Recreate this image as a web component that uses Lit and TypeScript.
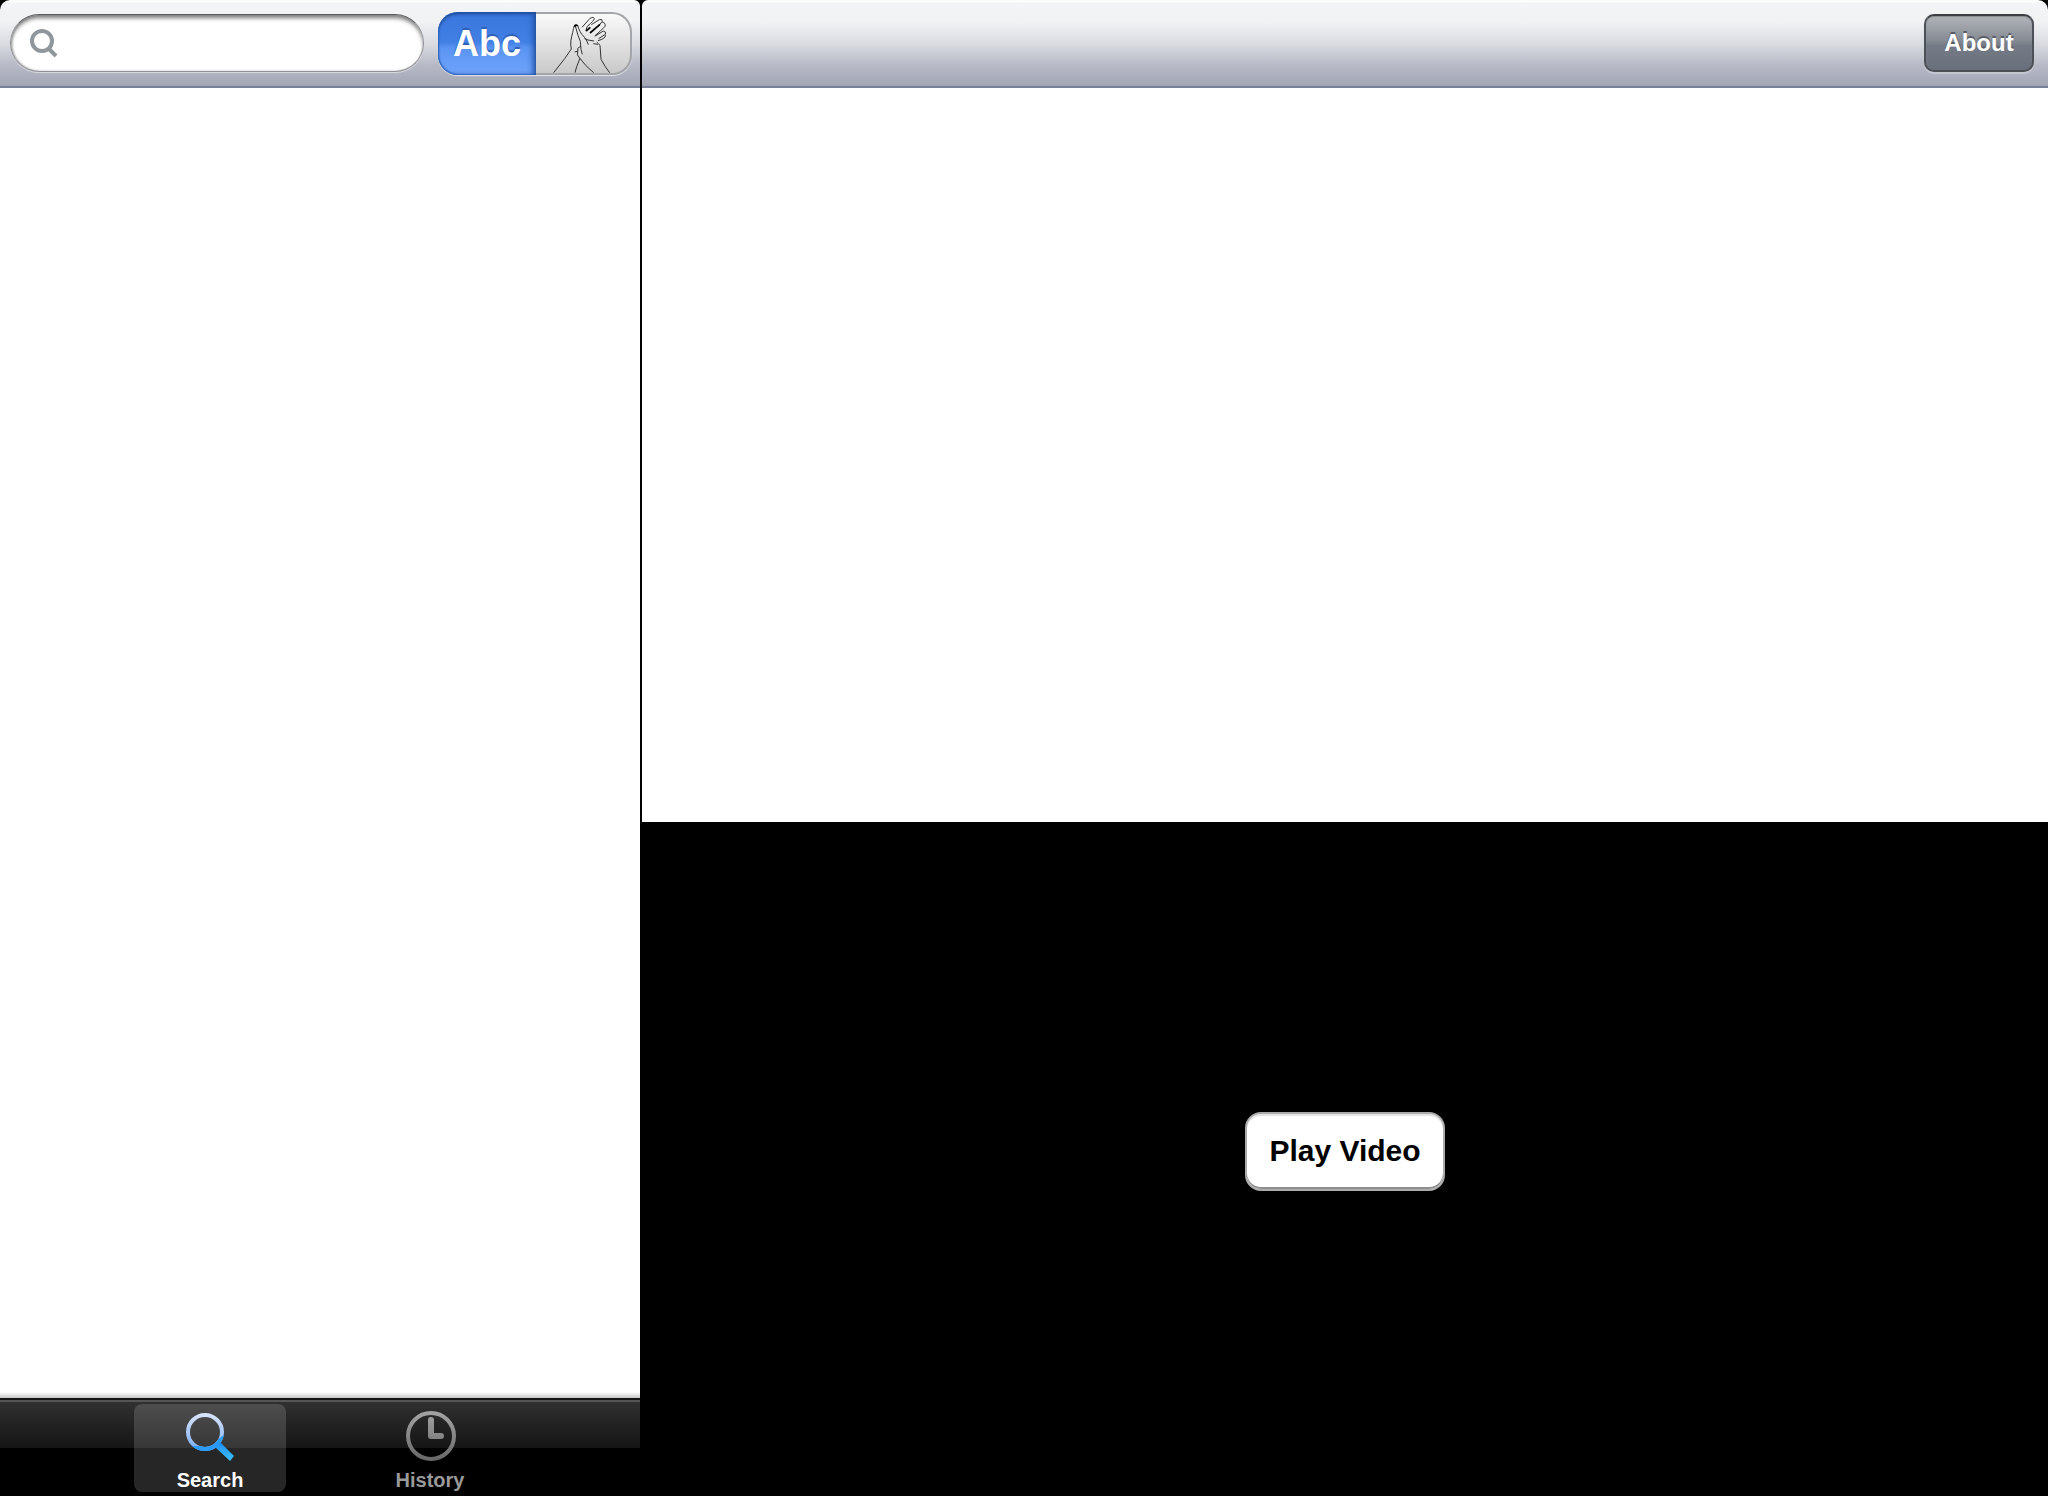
import { LitElement, html, css } from "lit";
import { customElement, state } from "lit/decorators.js";

const magnifier = html`<svg class="lens" viewBox="0 0 30 30" width="30" height="30" aria-hidden="true">
  <circle cx="13" cy="13" r="10" />
  <path d="M20 21 L27 28" />
</svg>`;

const hands = html`<svg class="hands" viewBox="43 38 180 171" width="60" height="57" aria-hidden="true">
  <path d="M45 208 L78 166 L98 137 C94 122 97 104 102 88 C104 78 105 71 108 66" />
  <path d="M110 68 L118 96 L125 114 L127 138 L131 153" />
  <path d="M117 66 C121 80 127 92 134 98 C140 105 145 112 149 124" />
  <path d="M127 128 L116 136 M108 146 L118 143 M118 137 L116 154 L124 166" />
  <path d="M109 208 L114 190 L124 165 L141 186 L165 208" />
  <path d="M138 106 L148 110 L166 113 M164 121 L178 123 M174 116 L184 126 L187 168 L200 190 L213 208" />
  <path d="M130 72 L154 45 Q165 39 167 46 Q167 51 145 70" />
  <path d="M145 70 L142 82 M158 64 L182 49 Q192 46 191 54 L178 70" />
  <path d="M191 57 Q202 58 199 69 L184 84 L168 98" />
  <path d="M170 98 L194 83 Q204 85 200 93 L180 106 M201 96 Q200 106 178 112" />
  <path class="heavy" d="M142 83 L155 72 M154 89 L184 63" />
  <path class="heavy" d="M107 70 Q111 62 117 68" />
</svg>`;

const searchIcon = html`<svg viewBox="0 0 54 54" width="54" height="54" aria-hidden="true">
  <defs>
    <linearGradient id="pale" x1="0" y1="0" x2="0" y2="1">
      <stop offset="0" stop-color="#d6e2f9" /><stop offset="1" stop-color="#7eaef2" />
    </linearGradient>
    <linearGradient id="vivid" x1="0" y1="0" x2="0" y2="1">
      <stop offset="0" stop-color="#1f8df4" /><stop offset="1" stop-color="#3cc0fb" />
    </linearGradient>
    <clipPath id="lower"><path d="M0 34 Q25 42 46 20 L54 20 L54 54 L0 54 Z" /></clipPath>
  </defs>
  <circle cx="22" cy="22" r="17" fill="none" stroke="url(#pale)" stroke-width="4" />
  <g clip-path="url(#lower)">
    <circle cx="22" cy="22" r="17" fill="none" stroke="#2b9cf6" stroke-width="4" />
  </g>
  <path d="M32 37 L37 32 L51 46 L47 51 Z" fill="url(#vivid)" />
</svg>`;

const historyIcon = html`<svg viewBox="0 0 54 54" width="54" height="54" aria-hidden="true">
  <defs>
    <linearGradient id="steel" gradientUnits="userSpaceOnUse" x1="0" y1="0" x2="0" y2="52">
      <stop offset="0" stop-color="#a6a6a6" /><stop offset="1" stop-color="#666" />
    </linearGradient>
  </defs>
  <circle cx="28" cy="26" r="23" fill="none" stroke="url(#steel)" stroke-width="4" />
  <path d="M28 10 V26 H38" fill="none" stroke="url(#steel)" stroke-width="6" stroke-linecap="round" stroke-linejoin="round" />
</svg>`;

@customElement("app-root")
export class AppRoot extends LitElement {
  @state() private mode = "text";
  @state() private tab = "Search";

  static styles = css`
    :host {
      display: grid;
      grid-template-columns: 31.25% minmax(0, 1fr);
      column-gap: 2px;
      min-height: 100vh;
      background: #000;
      font-family: "Liberation Sans", Arial, sans-serif;
      font-weight: bold;
    }
    button, input {
      font: inherit;
      margin: 0;
      padding: 0;
      border: 0;
      box-sizing: border-box;
    }
    svg { display: block; flex: none; }
    .pane { display: flex; flex-direction: column; min-width: 0; }
    .bar {
      display: flex;
      flex: none;
      align-items: center;
      box-sizing: border-box;
      height: 88px;
      border-bottom: 2px solid #7b8099;
      background: linear-gradient(#fbfcfc 0, #fbfcfc 2px, #f3f4f6 3px, #f1f2f4 22px, #d9dbe1 44px, #b6b9c5 66px, #a2a5b4 86px);
    }
    .bar-side { gap: 14px; padding: 0 8px 0 10px; border-radius: 10px 6px 0 0; }
    .bar-main { justify-content: flex-end; padding: 0 14px; border-radius: 6px 10px 0 0; }
    .field {
      flex: 1;
      min-width: 0;
      display: flex;
      align-items: center;
      gap: 10px;
      height: 58px;
      box-sizing: border-box;
      padding: 0 20px 0 18px;
      border-radius: 29px;
      border: 1px solid #8e8f94;
      border-top-color: #5c5d60;
      background: #fff;
      box-shadow: inset 0 4px 4px -1px #7a7a7a, inset 1px 0 2px #aaa, 0 1px 1px #dcdde2;
    }
    .field input { flex: 1; min-width: 0; height: 40px; background: none; outline: none; font-size: 28px; font-weight: normal; }
    .lens { fill: none; stroke: #8f979d; stroke-width: 4; }
    .segments {
      flex: none;
      display: flex;
      height: 63px;
      border-radius: 20px;
      box-shadow: 0 1px 1px #e4e5e9;
    }
    .seg { display: flex; justify-content: center; cursor: pointer; }
    .seg-text {
      align-items: center;
      width: 98px;
      padding-top: 2px;
      border-radius: 20px 0 0 20px;
      font-size: 36px;
      color: #fff;
      text-shadow: 0 -2px 1px #2f5fb5;
      background: linear-gradient(#3a76dc 0, #4280e6 30px, #5a94f2 36px, #70a5fb 63px);
      box-shadow: inset 0 2px 3px #1f4c9c, inset -4px 0 6px -1px #2456a8, inset 1px -1px 1px #3c74cf;
    }
    .seg-sign {
      align-items: flex-end;
      width: 96px;
      border: 2px solid #a4a5a9;
      border-left: 0;
      border-radius: 0 20px 20px 0;
      background: linear-gradient(#fafafa, #e2e2e2 50%, #c9c9c9);
    }
    .hands { fill: none; stroke: #333; stroke-width: 3; stroke-linejoin: round; }
    .heavy { stroke: #000; stroke-width: 5; }
    .about {
      height: 58px;
      min-width: 110px;
      padding: 0 18px;
      border: 2px solid #4c5057;
      border-top-color: #3d3f44;
      border-radius: 10px;
      background: linear-gradient(#b2b4b9, #858b94 45%, #747b86 55%, #69707b);
      box-shadow: 0 2px 1px #c6c9d2, inset 0 1px 1px #8a8c90;
      color: #fff;
      font-size: 24px;
      line-height: 54px;
      text-shadow: 0 -2px 0 #585c64;
      cursor: pointer;
    }
    .page { flex: 734; background: #fff; }
    .list {
      flex: 1;
      background: linear-gradient(to top, #c8c8c8 0, #fff 6px);
    }
    .video {
      flex: 674;
      display: flex;
      align-items: center;
      justify-content: center;
    }
    .play {
      height: 79px;
      margin-bottom: 16px;
      padding: 0 22px;
      border: 2px solid #ababab;
      border-radius: 16px;
      background: #fff;
      box-shadow: inset 0 -2px 0 #8e8e8e, inset 0 2px 0 #e4e4e4;
      color: #000;
      font-size: 30px;
      cursor: pointer;
    }
    .tabs {
      flex: none;
      display: flex;
      justify-content: center;
      gap: 68px;
      box-sizing: border-box;
      height: 98px;
      padding: 4px 0;
      border-top: 2px solid #161616;
      background: linear-gradient(#555 0, #555 2px, #303030 2px, #151515 48px, #000 48px);
    }
    .tab {
      display: flex;
      flex-direction: column;
      align-items: center;
      gap: 4px;
      width: 152px;
      height: 88px;
      padding-top: 6px;
      border-radius: 8px;
      background: none;
      color: #999;
      font-size: 20px;
      line-height: 24px;
      cursor: pointer;
    }
    .tab.on {
      background: rgba(255, 255, 255, 0.15);
      color: #fff;
    }
  `;

  render() {
    return html`
      <aside class="pane">
        <header class="bar bar-side">
          <label class="field">${magnifier}<input type="search" aria-label="Search" /></label>
          <div class="segments" role="group" aria-label="Search mode">
            <button class="seg seg-text" aria-pressed=${this.mode === "text"} @click=${() => (this.mode = "text")}>Abc</button>
            <button class="seg seg-sign" aria-label="Sign" aria-pressed=${this.mode === "sign"} @click=${() => (this.mode = "sign")}>${hands}</button>
          </div>
        </header>
        <section class="list" aria-label="Results"></section>
        <nav class="tabs">
          ${[["Search", searchIcon] as const, ["History", historyIcon] as const].map(
            ([name, icon]) => html`<button class="tab ${this.tab === name ? "on" : ""}" @click=${() => (this.tab = name)}>
              ${icon}<span>${name}</span>
            </button>`
          )}
        </nav>
      </aside>
      <main class="pane">
        <header class="bar bar-main"><button class="about">About</button></header>
        <section class="page" aria-label="Entry"></section>
        <section class="video" aria-label="Video"><button class="play">Play Video</button></section>
      </main>
    `;
  }
}
